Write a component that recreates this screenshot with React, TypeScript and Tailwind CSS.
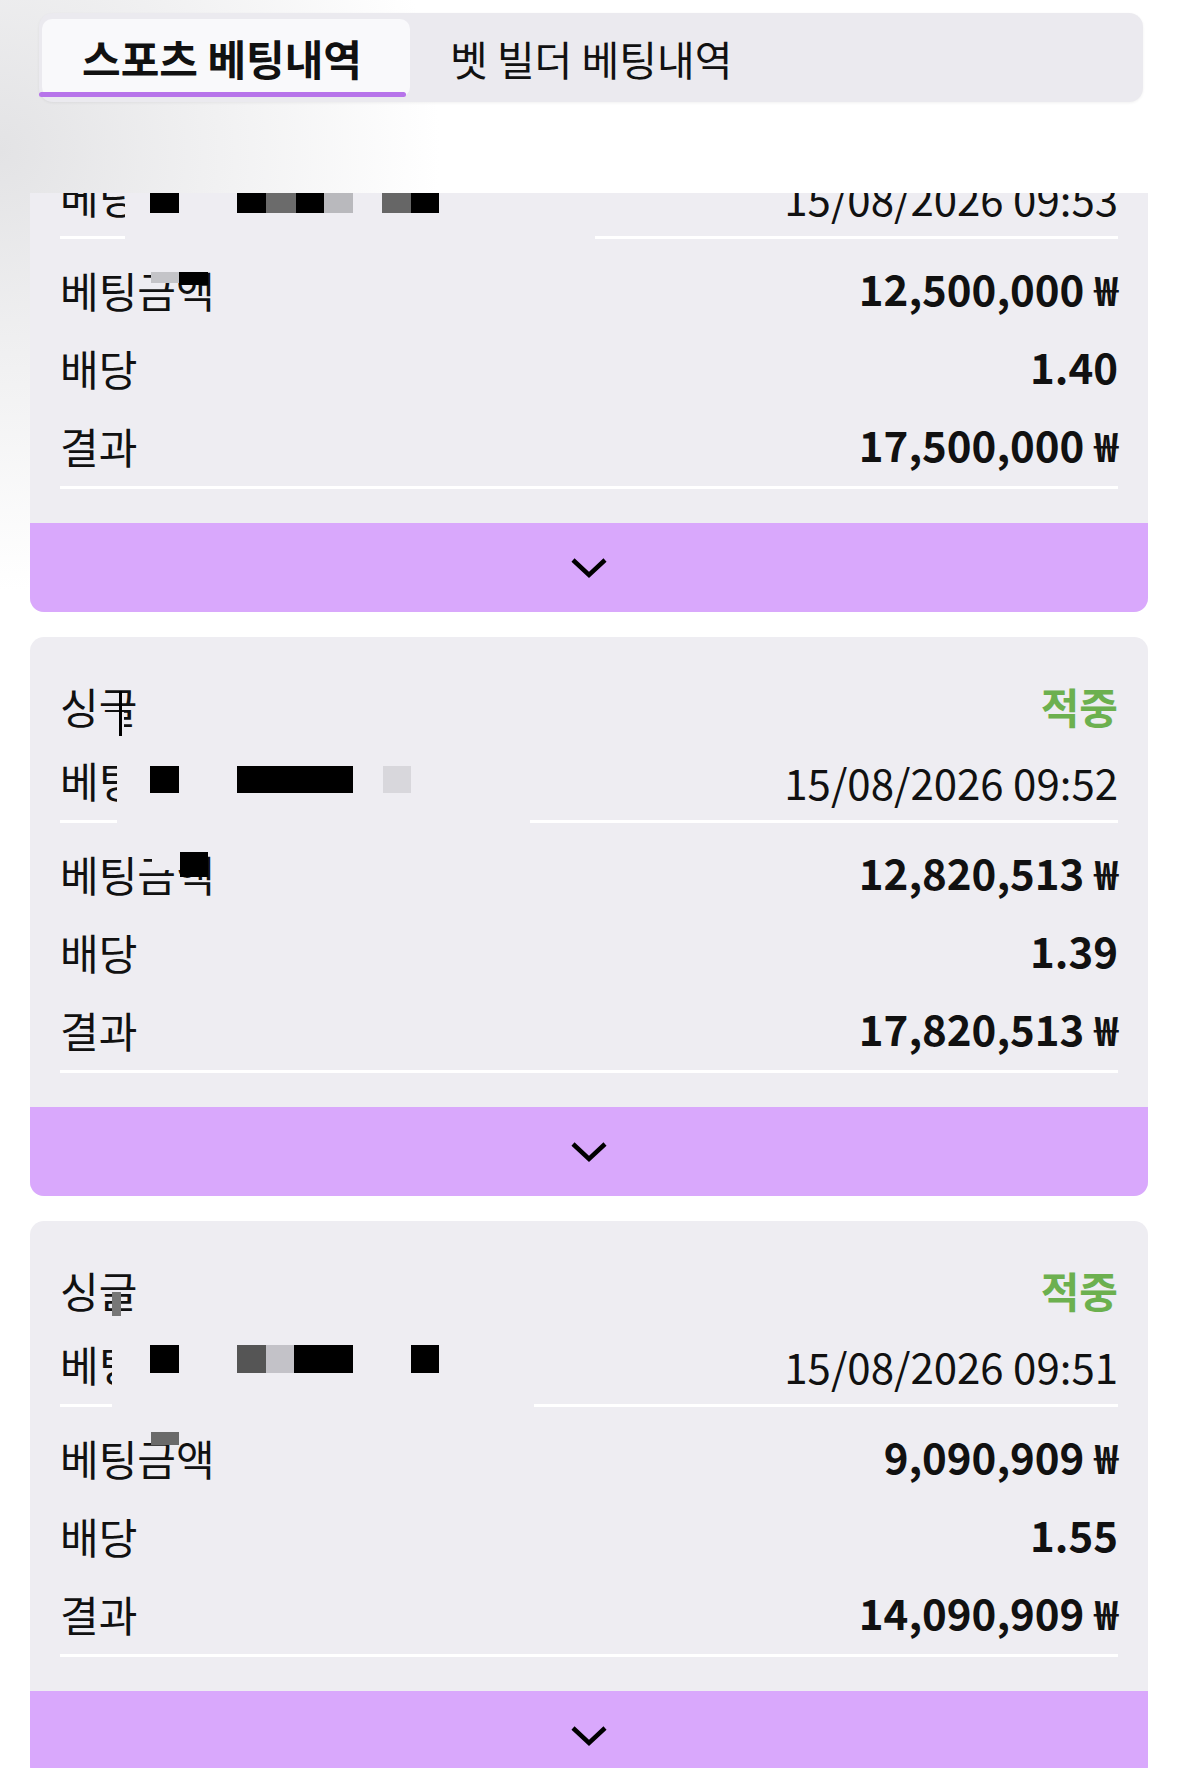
import React from "react";

type Patch = { x: number; y: number; w: number; h: number; c: string };

interface Bet {
    top: number; // page y of the card top (used for the redaction marks)
    type: string;
    result: string;
    date: string;
    amount: string;
    odds: string;
    payout: string;
    maskFrom: number;
    maskTo: number;
    marks: Patch[];
}

const CARD = "#eeedf2";

const bets: Bet[] = [
    {
        top: 53,
        type: "싱글",
        result: "적중",
        date: "15/08/2026 09:53",
        amount: "12,500,000",
        odds: "1.40",
        payout: "17,500,000",
        maskFrom: 125,
        maskTo: 595,
        marks: [
            { x: 150, y: 185, w: 29, h: 28, c: "#000" },
            { x: 237, y: 185, w: 29, h: 28, c: "#000" },
            { x: 266, y: 185, w: 30, h: 28, c: "#6b6b6b" },
            { x: 296, y: 185, w: 28, h: 28, c: "#000" },
            { x: 324, y: 185, w: 29, h: 28, c: "#b9b9bd" },
            { x: 382, y: 185, w: 29, h: 28, c: "#666" },
            { x: 411, y: 185, w: 28, h: 28, c: "#000" },
            { x: 151, y: 272, w: 28, h: 11, c: "#c4c4c8" },
            { x: 179, y: 272, w: 29, h: 13, c: "#000" },
        ],
    },
    {
        top: 637,
        type: "싱글",
        result: "적중",
        date: "15/08/2026 09:52",
        amount: "12,820,513",
        odds: "1.39",
        payout: "17,820,513",
        maskFrom: 117,
        maskTo: 530,
        marks: [
            { x: 100, y: 712, w: 24, h: 24, c: CARD },
            { x: 119, y: 691, w: 3, h: 45, c: "#000" },
            { x: 150, y: 766, w: 29, h: 27, c: "#000" },
            { x: 237, y: 766, w: 116, h: 27, c: "#000" },
            { x: 383, y: 766, w: 28, h: 27, c: "#d8d7dc" },
            { x: 152, y: 850, w: 28, h: 20, c: CARD },
            { x: 180, y: 852, w: 28, h: 25, c: "#000" },
        ],
    },
    {
        top: 1221,
        type: "싱글",
        result: "적중",
        date: "15/08/2026 09:51",
        amount: "9,090,909",
        odds: "1.55",
        payout: "14,090,909",
        maskFrom: 112,
        maskTo: 534,
        marks: [
            { x: 112, y: 1292, w: 9, h: 24, c: "#777" },
            { x: 150, y: 1345, w: 29, h: 28, c: "#000" },
            { x: 237, y: 1345, w: 29, h: 28, c: "#555" },
            { x: 266, y: 1345, w: 28, h: 28, c: "#c3c2c8" },
            { x: 294, y: 1345, w: 59, h: 28, c: "#000" },
            { x: 411, y: 1345, w: 28, h: 28, c: "#000" },
            { x: 151, y: 1432, w: 28, h: 13, c: "#6a6a6a" },
        ],
    },
];

function Chevron() {
    return (
        <svg width="38" height="22" viewBox="0 0 38 22" fill="none">
            <path d="M3 3 L19 18 L35 3" stroke="#000" strokeWidth="4.5" strokeLinejoin="miter" />
        </svg>
    );
}

function Won({ value }: { value: string }) {
    return (
        <span className="flex items-baseline font-bold text-[42px] leading-none text-[#111] -mt-[6px]">
            {value}
            <span className="ml-[10px] text-[40px]">₩</span>
        </span>
    );
}

function BetCard({ bet }: { bet: Bet }) {
    const label = "text-[42px] leading-none text-[#111] -mt-[2px]";
    return (
        <div className="relative shrink-0 rounded-[14px] bg-[#eeedf2] overflow-hidden">
            <div className="px-[30px] pt-[33px]">
                <div className="h-[76px] flex items-center justify-between">
                    <span className="text-[42px] leading-none text-[#111] -mt-[5px]">{bet.type}</span>
                    <span className="text-[42px] leading-none font-bold text-[#6cb04f] -mt-[5px]">{bet.result}</span>
                </div>
                <div className="h-[74px] flex items-center justify-between">
                    <span className="text-[42px] leading-none text-[#111] -mt-[6px]">베팅일시</span>
                    <span className="text-[42px] leading-none text-[#111] -mt-[2px]">{bet.date}</span>
                </div>
                <div className="h-[3px] bg-white" />
                <div className="mt-[13px] flex flex-col">
                    <div className="h-[78px] flex items-center justify-between">
                        <span className={label}>베팅금액</span>
                        <Won value={bet.amount} />
                    </div>
                    <div className="h-[78px] flex items-center justify-between">
                        <span className={label}>배당</span>
                        <span className="font-bold text-[42px] leading-none text-[#111] -mt-[6px]">{bet.odds}</span>
                    </div>
                    <div className="h-[78px] flex items-center justify-between">
                        <span className={label}>결과</span>
                        <Won value={bet.payout} />
                    </div>
                </div>
                <div className="h-[3px] bg-white" />
                <div className="h-[34px]" />
            </div>
            <button className="w-full h-[89px] flex items-center justify-center bg-[#d9a8fc]">
                <Chevron />
            </button>

            {/* redacted bits of the original screenshot */}
            <div
                className="absolute bg-[#eeedf2]"
                style={{ left: bet.maskFrom - 30, top: 105, width: bet.maskTo - bet.maskFrom, height: 86 }}
            />
            {bet.marks.map((m, i) => (
                <div
                    key={i}
                    className="absolute"
                    style={{ left: m.x - 30, top: m.y - bet.top, width: m.w, height: m.h, background: m.c }}
                />
            ))}
        </div>
    );
}

export default function App() {
    return (
        <div className="w-[1179px] h-[1785px] flex flex-col overflow-hidden font-['Noto_Sans_CJK_KR',sans-serif] bg-[radial-gradient(circle_440px_at_0px_150px,#e3e3e5,#ffffff)]">
            <header className="h-[193px] shrink-0 pt-[13px] pl-[39px] pr-[36px]">
                <div className="h-[89px] flex rounded-[14px] bg-[#ebeaef] pt-[6px] pb-[5px] pl-[3px] shadow-[0_1px_3px_rgba(0,0,0,0.06)]">
                    <div className="relative w-[368px] h-[78px] flex items-center pl-[40px] rounded-[10px] bg-[#f9f9fb]">
                        <span className="text-[42px] leading-none font-bold text-[#111]">스포츠 베팅내역</span>
                        <div className="absolute left-[-3px] bottom-0 w-[367px] h-[5px] rounded-full bg-[#b774ea]" />
                    </div>
                    <div className="w-[368px] h-[78px] flex items-center pl-[40px]">
                        <span className="text-[41px] leading-none text-[#111]">벳 빌더 베팅내역</span>
                    </div>
                </div>
            </header>
            <main className="h-[1575px] shrink-0 overflow-hidden pl-[30px] pr-[31px]">
                <div className="-mt-[140px] flex flex-col gap-[25px]">
                    {bets.map((b) => (
                        <BetCard key={b.top} bet={b} />
                    ))}
                </div>
            </main>
            <div className="flex-1 bg-white" />
        </div>
    );
}
